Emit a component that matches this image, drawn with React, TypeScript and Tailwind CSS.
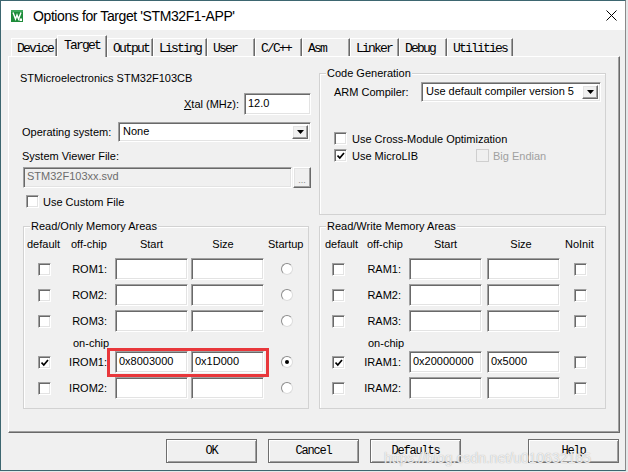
import React from "react";

const SUNKEN =
  "border border-t-[#a0a0a0] border-l-[#a0a0a0] border-r-white border-b-white shadow-[inset_1px_1px_0_#696969,inset_-1px_-1px_0_#e3e3e3]";
const RAISED =
  "border border-t-white border-l-white border-r-[#696969] border-b-[#696969] shadow-[inset_-1px_-1px_0_#a0a0a0,inset_1px_1px_0_#e3e3e3]";

function Check({ checked = false, disabled = false }: { checked?: boolean; disabled?: boolean }) {
  return (
    <span
      className={`relative block shrink-0 w-[13px] h-[13px] ${
        disabled
          ? "border border-[#cfcfcf] bg-[#f0f0f0]"
          : "bg-white border border-t-[#a0a0a0] border-l-[#a0a0a0] border-r-white border-b-white shadow-[inset_1px_1px_0_#696969,inset_-1px_-1px_0_#e3e3e3]"
      }`}
    >
      {checked && (
        <svg className="absolute left-[2px] top-[2px]" width="8" height="8" viewBox="0 0 8 8">
          <path d="M0.5 3.5 L2.8 6 L7 1" stroke="#000" strokeWidth="1.7" fill="none" />
        </svg>
      )}
    </span>
  );
}

function Radio({ checked = false }: { checked?: boolean }) {
  return (
    <span className="relative block w-[12px] h-[12px] rounded-full bg-white border border-t-[#8c8c8c] border-l-[#8c8c8c] border-r-[#dcdcdc] border-b-[#dcdcdc]">
      {checked && <span className="absolute left-[3px] top-[3px] w-[4px] h-[4px] rounded-full bg-black" />}
    </span>
  );
}

function Field({ value = "", className = "" }: { value?: string; className?: string }) {
  return (
    <div className={`h-[22px] bg-white ${SUNKEN} pl-[3px] pt-[1px] text-[11px] leading-[17px] text-black ${className}`}>
      {value}
    </div>
  );
}

function Arrow() {
  return (
    <div className={`absolute right-[2px] top-[2px] bottom-[2px] w-[16px] bg-[#f0f0f0] ${RAISED} flex items-center justify-center`}>
      <svg width="7" height="4" viewBox="0 0 7 4">
        <path d="M0 0 H7 L3.5 4 Z" fill="#000" />
      </svg>
    </div>
  );
}

function Tab({ label, className, active = false }: { label: string; className: string; active?: boolean }) {
  if (active)
    return (
      <div
        className={`relative z-10 -mb-[1px] h-[22px] bg-[#f0f0f0] border-t border-l border-r border-t-white border-l-white border-r-[#696969] shadow-[inset_-1px_0_0_#a0a0a0] pl-[6px] pt-[3px] leading-[13px] ${className}`}
      >
        {label}
      </div>
    );
  return (
    <div
      className={`h-[18px] bg-[#f0f0f0] border-t border-l border-r border-t-white border-l-white border-r-[#696969] shadow-[inset_-1px_0_0_#a0a0a0] pl-[5px] pt-[3px] leading-[13px] ${className}`}
    >
      {label}
    </div>
  );
}

function Button({ label, className = "" }: { label: string; className?: string }) {
  return (
    <div
      className={`h-[24px] w-[91px] bg-[#f0f0f0] border border-[#6e6e6e] shadow-[inset_1px_1px_0_#ffffff,inset_-1px_-1px_0_#a0a0a0] flex items-center justify-center font-['Liberation_Mono',monospace] text-[12px] tracking-[-1.2px] text-black ${className}`}
    >
      {label}
    </div>
  );
}

function RomRow({ label, checked = false, start = "", size = "", radio = false }: { label: string; checked?: boolean; start?: string; size?: string; radio?: boolean }) {
  return (
    <div className="flex items-center h-[22px]">
      <div className="w-[14px] shrink-0" />
      <Check checked={checked} />
      <div className="w-[56px] text-right shrink-0">{label}</div>
      <Field className="ml-[8px] w-[73px] shrink-0" value={start} />
      <Field className="ml-[3px] w-[73px] shrink-0" value={size} />
      <div className="ml-[17px]">
        <Radio checked={radio} />
      </div>
    </div>
  );
}

function RamRow({ label, checked = false, start = "", size = "" }: { label: string; checked?: boolean; start?: string; size?: string }) {
  return (
    <div className="flex items-center h-[22px]">
      <div className="w-[12px] shrink-0" />
      <Check checked={checked} />
      <div className="w-[56px] text-right shrink-0">{label}</div>
      <Field className="ml-[8px] w-[73px] shrink-0" value={start} />
      <Field className="ml-[5px] w-[73px] shrink-0" value={size} />
      <div className="ml-[14px]">
        <Check />
      </div>
    </div>
  );
}

function GroupLabel({ text }: { text: string }) {
  return (
    <div className="absolute left-[6px] -top-[8px] bg-[#f0f0f0] px-[1px] leading-[14px]">{text}</div>
  );
}

export default function App() {
  return (
    <div className="relative w-[628px] h-[472px] bg-[#e4e8e9] overflow-hidden font-['Liberation_Sans',Arial,sans-serif] text-[11px] leading-[14px] text-black">
      <div className="w-[626px] h-[471px] border border-[#3d6670] border-r-[#8a8a8a] bg-[#f0f0f0] flex flex-col">
        {/* title bar */}
        <div className="h-[29px] bg-white flex items-center shrink-0">
          <svg className="ml-[10px]" width="12" height="12" viewBox="0 0 12 12">
            <rect x="0" y="0" width="12" height="12" fill="#1e8c3a" />
            <rect x="0" y="0" width="12" height="2" fill="#3aa85a" />
            <path d="M2 2.5 L4.5 9 L6 5 L7.5 9 L10 2.5" stroke="#fff" strokeWidth="1.4" fill="none" />
            <rect x="8.5" y="8.5" width="2.5" height="2.5" fill="#fff" />
          </svg>
          <div className="ml-[10px] text-[14px] tracking-[-0.4px] leading-[18px] text-black">
            Options for Target 'STM32F1-APP'
          </div>
          <div className="flex-1" />
          <svg className="mr-[8px]" width="11" height="11" viewBox="0 0 11 11">
            <path d="M0.5 0.5 L10.5 10.5 M10.5 0.5 L0.5 10.5" stroke="#000" strokeWidth="1" />
          </svg>
        </div>

        {/* tabs */}
        <div className="mt-[5px] h-[21px] flex items-end pl-[10px] font-['Liberation_Mono',monospace] text-[13px] tracking-[-1.8px] shrink-0">
          <Tab label="Device" className="w-[46px]" />
          <Tab label="Target" className="w-[50px]" active />
          <Tab label="Output" className="w-[46px]" />
          <Tab label="Listing" className="w-[54px]" />
          <Tab label="User" className="w-[48px]" />
          <Tab label="C/C++" className="w-[47px]" />
          <Tab label="Asm" className="w-[48px]" />
          <Tab label="Linker" className="w-[49px]" />
          <Tab label="Debug" className="w-[48px]" />
          <Tab label="Utilities" className="w-[66px]" />
        </div>

        {/* panel */}
        <div className="ml-[7px] w-[612px] h-[377px] shrink-0 border border-t-white border-l-white border-r-[#696969] border-b-[#696969] shadow-[inset_-1px_-1px_0_#a0a0a0]">
          <div className="flex items-start h-[158px]">
            {/* left column */}
            <div className="ml-[11px] w-[291px] flex flex-col">
              <div className="mt-[14px] h-[14px]">STMicroelectronics STM32F103CB</div>
              <div className="mt-[8px] h-[22px] flex items-center justify-end">
                <span>
                  <span className="underline">X</span>tal (MHz):
                </span>
                <Field className="ml-[5px] w-[67px]" value="12.0" />
              </div>
              <div className="mt-[7px] h-[20px] flex items-center">
                <span className="ml-[2px] w-[96px]">Operating system:</span>
                <div className={`relative w-[193px] h-[20px] bg-white ${SUNKEN} pl-[4px] leading-[17px]`}>
                  None
                  <Arrow />
                </div>
              </div>
              <div className="mt-[7px] h-[14px] pl-[2px]">System Viewer File:</div>
              <div className="mt-[4px] h-[21px] flex">
                <div className={`ml-[3px] w-[269px] h-[21px] bg-[#f0f0f0] ${SUNKEN} pl-[3px] leading-[17px] text-[#6d6d6d]`}>
                  STM32F103xx.svd
                </div>
                <div className={`ml-[1px] w-[18px] h-[21px] bg-[#f0f0f0] ${RAISED} flex items-end justify-center pb-[3px] text-[9px] leading-[8px] text-[#8a8a8a]`}>
                  ...
                </div>
              </div>
              <div className="mt-[7px] h-[13px] flex items-center">
                <div className="ml-[6px]">
                  <Check />
                </div>
                <span className="ml-[4px]">Use Custom File</span>
              </div>
            </div>

            {/* code generation */}
            <div className="ml-[8px] mt-[16px] w-[287px] h-[142px] relative border border-[#d2d2d2] shadow-[inset_1px_1px_0_#ffffff]">
              <GroupLabel text="Code Generation" />
              <div className="mt-[8px] h-[20px] flex items-center">
                <span className="ml-[14px] w-[87px]">ARM Compiler:</span>
                <div className={`relative w-[180px] h-[20px] bg-white ${SUNKEN} pl-[4px] leading-[17px]`}>
                  Use default compiler version 5
                  <Arrow />
                </div>
              </div>
              <div className="mt-[30px] h-[13px] flex items-center pl-[14px]">
                <Check />
                <span className="ml-[5px]">Use Cross-Module Optimization</span>
              </div>
              <div className="mt-[4px] h-[13px] flex items-center pl-[14px]">
                <Check checked />
                <span className="ml-[5px] w-[124px]">Use MicroLIB</span>
                <Check disabled />
                <span className="ml-[4px] text-[#a0a0a0]">Big Endian</span>
              </div>
            </div>
          </div>

          {/* memory areas */}
          <div className="mt-[11px] flex items-start">
            <div className="ml-[14px] w-[286px] h-[183px] relative border border-[#d2d2d2] shadow-[inset_1px_1px_0_#ffffff]">
              <GroupLabel text="Read/Only Memory Areas" />
              <div className="mt-[10px] h-[14px] flex">
                <span className="pl-[3px] w-[47px]">default</span>
                <span className="w-[44px]">off-chip</span>
                <span className="w-[73px] text-center">Start</span>
                <span className="ml-[3px] w-[64px] text-center">Size</span>
                <span className="ml-[13px]">Startup</span>
              </div>
              <div className="mt-[7px] flex flex-col gap-[4px]">
                <RomRow label="ROM1:" />
                <RomRow label="ROM2:" />
                <RomRow label="ROM3:" />
              </div>
              <div className="mt-[4px] h-[14px] pl-[49px]">on-chip</div>
              <div className="mt-[1px] flex flex-col gap-[4px]">
                <RomRow label="IROM1:" checked start="0x8003000" size="0x1D000" radio />
                <RomRow label="IROM2:" />
              </div>
              <div className="absolute left-[83px] top-[121px] w-[162px] h-[29px] border-[3px] border-[#e8373b]" />
            </div>

            <div className="ml-[10px] w-[287px] h-[183px] relative border border-[#d2d2d2] shadow-[inset_1px_1px_0_#ffffff]">
              <GroupLabel text="Read/Write Memory Areas" />
              <div className="mt-[10px] h-[14px] flex">
                <span className="pl-[5px] w-[47px]">default</span>
                <span className="w-[42px]">off-chip</span>
                <span className="w-[73px] text-center">Start</span>
                <span className="ml-[5px] w-[68px] text-center">Size</span>
                <span className="ml-[10px]">NoInit</span>
              </div>
              <div className="mt-[7px] flex flex-col gap-[4px]">
                <RamRow label="RAM1:" />
                <RamRow label="RAM2:" />
                <RamRow label="RAM3:" />
              </div>
              <div className="mt-[4px] h-[14px] pl-[48px]">on-chip</div>
              <div className="mt-[1px] flex flex-col gap-[4px]">
                <RamRow label="IRAM1:" checked start="0x20000000" size="0x5000" />
                <RamRow label="IRAM2:" />
              </div>
            </div>
          </div>
        </div>

        {/* buttons */}
        <div className="mt-[6px] flex">
          <Button label="OK" className="ml-[165px]" />
          <Button label="Cancel" className="ml-[11px]" />
          <Button label="Defaults" className="ml-[11px]" />
          <Button label="Help" className="ml-[67px]" />
        </div>
      </div>

      {/* watermark */}
      <div className="absolute left-[384px] top-[449px] text-[14px] leading-[18px] text-white/80 [text-shadow:0_0_1px_#9a9a9a]">
        https://blog.csdn.net/u010632165
      </div>
    </div>
  );
}
